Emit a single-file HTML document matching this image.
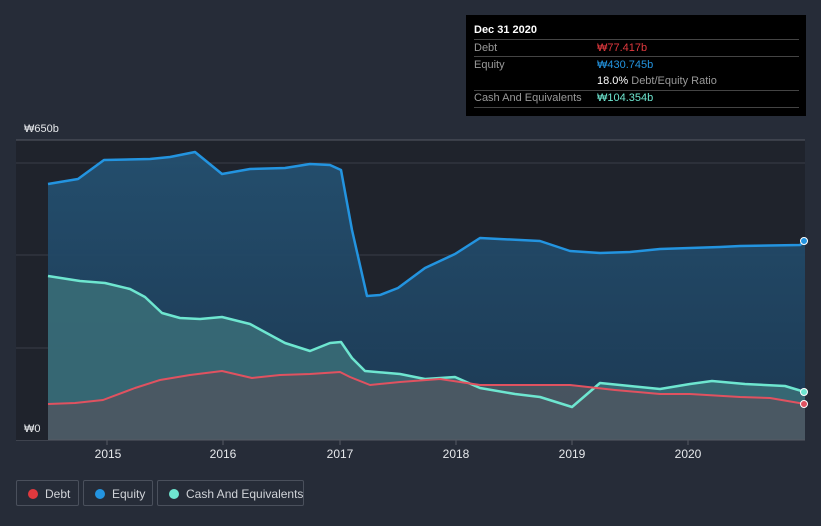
<!DOCTYPE html>
<html><head><meta charset="utf-8"><style>
html,body{margin:0;width:821px;height:526px;overflow:hidden}
body{background:#262c38;font-family:"Liberation Sans","Noto Sans CJK KR",sans-serif;position:relative}
.tip{position:absolute;left:466px;top:15px;width:340px;height:101px;background:#000}
.tip div{position:absolute;font-size:11px;white-space:nowrap}
.ln{position:absolute;left:8px;width:325px;height:1px;background:#444}
.leg{position:absolute;top:480px;height:26px;border:1px solid #4a505c;border-radius:2px;color:#d0d3d8;font-size:12px;line-height:26px;box-sizing:border-box;white-space:nowrap}
.leg i{position:absolute;left:11px;top:8px;width:10px;height:10px;border-radius:50%}
</style></head><body>
<svg width="821" height="526" style="position:absolute;left:0;top:0">
<defs>
<linearGradient id="eg" x1="0" y1="0" x2="0" y2="1"><stop offset="0" stop-color="#245070"/><stop offset="1" stop-color="#1c3a55"/></linearGradient>
</defs>
<rect x="16" y="140" width="789" height="300" fill="#1f232c"/>
<line x1="16" y1="140" x2="805" y2="140" stroke="#555a63"/>
<line x1="16" y1="163" x2="805" y2="163" stroke="#383d47"/>
<line x1="16" y1="255" x2="805" y2="255" stroke="#383d47"/>
<line x1="16" y1="348" x2="805" y2="348" stroke="#383d47"/>
<polygon fill="url(#eg)" opacity="0.95" points="48,440 48,184 78,179 104,160 150,159 170,157 195,152 222,174 250,169 285,168 310,164 330,165 341,170 352,230 367,296 380,295 398,288 425,268 455,254 480,238 540,241 570,251 600,253 630,252 660,249 720,247 740,246 800,245 805,241 805,440"/>
<polygon fill="#3b6e78" opacity="0.85" points="48,440 48,276 80,281 105,283 130,289 145,297 162,313 180,318 200,319 222,317 250,324 285,343 310,351 330,343 341,342 352,358 365,371 400,374 425,379 455,377 480,388 515,394 540,397 572,407 600,383 630,386 660,389 690,384 712,381 745,384 785,386 805,392 805,440"/>
<polygon fill="#4c5662" opacity="0.9" points="48,440 48,404 75,403 103,400 135,388 160,380 190,375 222,371 252,378 280,375 310,374 340,372 350,377 370,385 400,382 440,379 480,385 540,385 570,385 615,390 660,394 690,394 740,397 770,398 805,404 805,440"/>
<polyline fill="none" stroke="#2394e0" stroke-width="2.5" stroke-linejoin="round" points="48,184 78,179 104,160 150,159 170,157 195,152 222,174 250,169 285,168 310,164 330,165 341,170 352,230 367,296 380,295 398,288 425,268 455,254 480,238 540,241 570,251 600,253 630,252 660,249 720,247 740,246 800,245 805,241"/>
<polyline fill="none" stroke="#6ee6d0" stroke-width="2.5" stroke-linejoin="round" points="48,276 80,281 105,283 130,289 145,297 162,313 180,318 200,319 222,317 250,324 285,343 310,351 330,343 341,342 352,358 365,371 400,374 425,379 455,377 480,388 515,394 540,397 572,407 600,383 630,386 660,389 690,384 712,381 745,384 785,386 805,392"/>
<polyline fill="none" stroke="#e05260" stroke-width="2" stroke-linejoin="round" points="48,404 75,403 103,400 135,388 160,380 190,375 222,371 252,378 280,375 310,374 340,372 350,377 370,385 400,382 440,379 480,385 540,385 570,385 615,390 660,394 690,394 740,397 770,398 805,404"/>
<circle cx="804" cy="241" r="3.5" fill="#2394e0" stroke="#fff" stroke-width="1"/>
<circle cx="804" cy="392" r="3.5" fill="#6ee6d0" stroke="#fff" stroke-width="1"/>
<circle cx="804" cy="404" r="3.5" fill="#e05260" stroke="#fff" stroke-width="1"/>
<line x1="16" y1="440" x2="805" y2="440" stroke="#555a63"/>
<g stroke="#555a63"><line x1="107" y1="440" x2="107" y2="445"/><line x1="223" y1="440" x2="223" y2="445"/><line x1="340" y1="440" x2="340" y2="445"/><line x1="456" y1="440" x2="456" y2="445"/><line x1="572" y1="440" x2="572" y2="445"/><line x1="688" y1="440" x2="688" y2="445"/></g>
<g fill="#e6e8eb" font-size="12" text-anchor="middle" font-family="Liberation Sans, sans-serif"><text x="108" y="458">2015</text><text x="223" y="458">2016</text><text x="340" y="458">2017</text><text x="456" y="458">2018</text><text x="572" y="458">2019</text><text x="688" y="458">2020</text></g>
<rect x="16" y="420" width="32" height="20" fill="#1f232c"/>
<g fill="#e6e8eb" font-size="11" font-family="Liberation Sans, Noto Sans CJK KR, sans-serif"><text x="24" y="132">₩650b</text><text x="24" y="432">₩0</text></g>
</svg>
<div class="tip">
<div style="left:8px;top:9px;color:#fff;font-weight:bold">Dec 31 2020</div>
<div class="ln" style="top:24px"></div>
<div style="left:8px;top:27px;color:#999">Debt</div><div style="left:131px;top:27px;color:#e0393e">₩77.417b</div>
<div class="ln" style="top:41px"></div>
<div style="left:8px;top:44px;color:#999">Equity</div><div style="left:131px;top:44px;color:#2394e0">₩430.745b</div>
<div style="left:131px;top:60px;color:#fff">18.0% <span style="color:#999">Debt/Equity Ratio</span></div>
<div class="ln" style="top:75px"></div>
<div style="left:8px;top:77px;color:#999">Cash And Equivalents</div><div style="left:131px;top:77px;color:#6ee6d0">₩104.354b</div>
<div class="ln" style="top:92px"></div>
</div>
<div class="leg" style="left:16px;width:63px"><i style="background:#e0393e"></i><span style="position:absolute;left:28px">Debt</span></div>
<div class="leg" style="left:83px;width:70px"><i style="background:#2394e0"></i><span style="position:absolute;left:28px">Equity</span></div>
<div class="leg" style="left:157px;width:147px"><i style="background:#6ee6d0"></i><span style="position:absolute;left:28px">Cash And Equivalents</span></div>
</body></html>
